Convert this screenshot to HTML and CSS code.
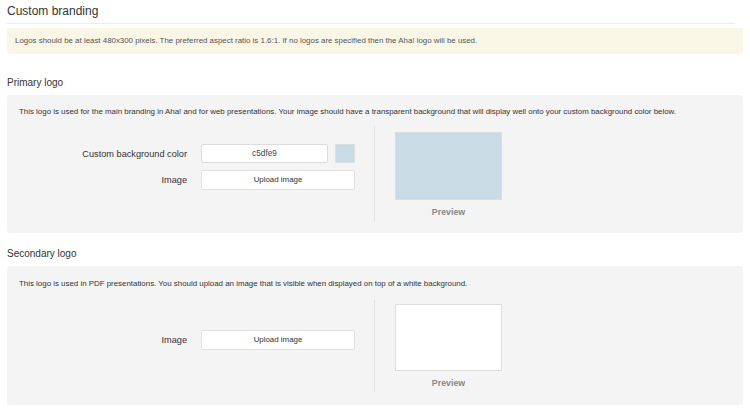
FILE: index.html
```html
<!DOCTYPE html>
<html>
<head>
<meta charset="utf-8">
<link rel="stylesheet" href="styles.css">
</head>
<body>
<div class="page">
  <h1 class="title">Custom branding</h1>
  <div class="alert">Logos should be at least 480x300 pixels. The preferred aspect ratio is 1.6:1. If no logos are specified then the Aha! logo will be used.</div>

  <h2 class="section-title first">Primary logo</h2>
  <div class="panel">
    <p class="desc">This logo is used for the main branding in Aha! and for web presentations. Your image should have a transparent background that will display well onto your custom background color below.</p>
    <div class="row">
      <div class="form">
        <div class="field">
          <label class="label">Custom background color</label>
          <div class="input">c5dfe9</div>
          <div class="swatch"></div>
        </div>
        <div class="field">
          <label class="label">Image</label>
          <div class="button">Upload image</div>
        </div>
      </div>
      <div class="preview">
        <div class="preview-box colored"></div>
        <div class="preview-label">Preview</div>
      </div>
    </div>
  </div>

  <h2 class="section-title">Secondary logo</h2>
  <div class="panel second">
    <p class="desc">This logo is used in PDF presentations. You should upload an image that is visible when displayed on top of a white background.</p>
    <div class="row short">
      <div class="form">
        <div class="field">
          <label class="label">Image</label>
          <div class="button">Upload image</div>
        </div>
      </div>
      <div class="preview">
        <div class="preview-box white"></div>
        <div class="preview-label">Preview</div>
      </div>
    </div>
  </div>
</div>
</body>
</html>
```

FILE: styles.css
```css
* { box-sizing: border-box; }
html, body { margin: 0; padding: 0; background: #fff; }
body {
  font-family: "Liberation Sans", Arial, Helvetica, sans-serif;
  color: #333;
}
.page { padding: 0 7px; }

.title {
  margin: 0;
  padding-top: 4px;
  height: 24px;
  font-size: 12px;
  line-height: 14px;
  font-weight: normal;
  color: #333;
  border-bottom: 1px solid #ececec;
  margin-right: 8px;
}
.alert {
  margin-top: 4px;
  height: 26px;
  background: #faf6e5;
  border-radius: 3px;
  padding: 0 8px;
  font-size: 7.9px;
  line-height: 26px;
  color: #555;
}

.section-title {
  margin: 14px 0 5px;
  font-size: 10px;
  line-height: 14px;
  font-weight: normal;
  color: #333;
}
.section-title.first { margin-top: 22px; }

.panel {
  background: #f4f4f4;
  border-radius: 3px;
  padding: 12px 12px 12px;
}
.panel.second { padding-top: 13px; padding-bottom: 13px; }
.desc {
  margin: 0 0 9px;
  font-size: 7.9px;
  line-height: 10px;
  color: #333;
}
.panel.second .desc { margin-bottom: 11px; }

.row { display: flex; }
.form {
  width: 356px;
  border-right: 1px solid #e2e2e2;
  display: flex;
  flex-direction: column;
  justify-content: center;
  gap: 7px;
  padding-bottom: 13px;
}
.field {
  display: flex;
  align-items: center;
}
.label {
  width: 168px;
  text-align: right;
  font-size: 9.2px;
  color: #333;
  margin-right: 14px;
}
.input {
  width: 127px;
  height: 19px;
  background: #fff;
  border: 1px solid #dcdcdc;
  border-radius: 2px;
  font-size: 8.3px;
  line-height: 17px;
  text-align: center;
  color: #444;
}
.swatch {
  width: 20px;
  height: 19px;
  margin-left: 7px;
  background: #c9dce5;
  border: 1px solid #d9dfe2;
}
.button {
  width: 154px;
  height: 20px;
  background: #fff;
  border: 1px solid #e2e2e2;
  border-radius: 2px;
  font-size: 7.9px;
  line-height: 18px;
  text-align: center;
  color: #333;
}

.preview {
  padding: 6px 0 3px 20px;
  display: flex;
  flex-direction: column;
  align-items: center;
  width: 127px;
}
.preview-box {
  width: 107px;
  height: 68px;
  border: 1px solid #dedede;
}
.preview-box.colored { background: #c9dce5; }
.preview-box.white { background: #fff; }
.row.short .preview { padding-top: 4px; padding-bottom: 3px; }
.row.short .preview-box { height: 67px; }
.preview-label {
  margin-top: 6px;
  font-size: 8.8px;
  line-height: 12px;
  font-weight: bold;
  color: #888;
}
```
